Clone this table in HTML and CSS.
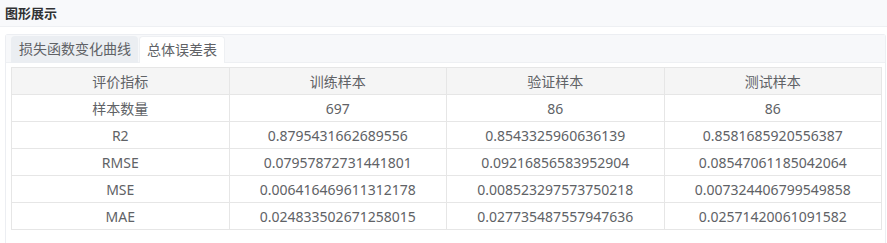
FILE: index.html
```html
<!DOCTYPE html>
<html lang="zh">
<head>
<meta charset="utf-8">
<link rel="stylesheet" href="styles.css">
</head>
<body>
<div class="page">
  <div class="title-bar">图形展示</div>
  <div class="card">
    <div class="tabs">
      <div class="tab">损失函数变化曲线</div>
      <div class="tab active">总体误差表</div>
    </div>
    <div class="panel">
      <table class="grid">
        <thead>
          <tr><th>评价指标</th><th>训练样本</th><th>验证样本</th><th>测试样本</th></tr>
        </thead>
        <tbody>
          <tr><td>样本数量</td><td>697</td><td>86</td><td>86</td></tr>
          <tr><td>R2</td><td>0.8795431662689556</td><td>0.8543325960636139</td><td>0.8581685920556387</td></tr>
          <tr><td>RMSE</td><td>0.07957872731441801</td><td>0.09216856583952904</td><td>0.08547061185042064</td></tr>
          <tr><td>MSE</td><td>0.006416469611312178</td><td>0.008523297573750218</td><td>0.007324406799549858</td></tr>
          <tr><td>MAE</td><td>0.024833502671258015</td><td>0.027735487557947636</td><td>0.02571420061091582</td></tr>
        </tbody>
      </table>
    </div>
  </div>
</div>
</body>
</html>
```

FILE: styles.css
```css
* { box-sizing: border-box; }
html, body { margin: 0; padding: 0; background: #fff; }
body {
  font-family: "Noto Sans", "Noto Sans CJK SC", sans-serif;
  color: #606266;
  font-size: 14px;
  width: 887px;
  height: 243px;
  overflow: hidden;
}
.title-bar {
  height: 27px;
  background: #f8f9fb;
  border-bottom: 1px solid #eef0f3;
  padding-left: 5px;
  font-weight: bold;
  font-size: 13px;
  color: #303133;
  line-height: 26px;
}
.card {
  margin: 7px 1px 0 5px;
  border: 1px solid #eceef2;
  border-bottom: none;
  border-radius: 3px 3px 0 0;
  background: #fff;
}
.tabs {
  display: flex;
  background: #f7f8fa;
  height: 28px;
  padding: 1px 0 0 5px;
  border-bottom: 1px solid #eef0f3;
}
.tab {
  height: 27px;
  line-height: 26px;
  padding: 0 7px 0 8px;
  font-size: 14px;
  color: #606266;
  background: #ebeef2;
  border-radius: 4px 4px 0 0;
  margin-right: 1px;
}
.tab.active {
  background: #fff;
  border: 1px solid #eef0f3;
  border-bottom: none;
  height: 27px;
  margin-bottom: -1px;
  padding: 0 7px;
}
.panel {
  padding: 4px 4px 20px 5px;
}
.grid {
  width: 871px;
  border-collapse: collapse;
  table-layout: fixed;
}
.grid th, .grid td {
  border: 1px solid #e6e6e6;
  height: 27px;
  padding: 0;
  text-align: center;
  font-weight: normal;
  font-size: 14px;
  color: #606266;
  line-height: 25px;
}
.grid th { background: #f5f5f5; }
```
